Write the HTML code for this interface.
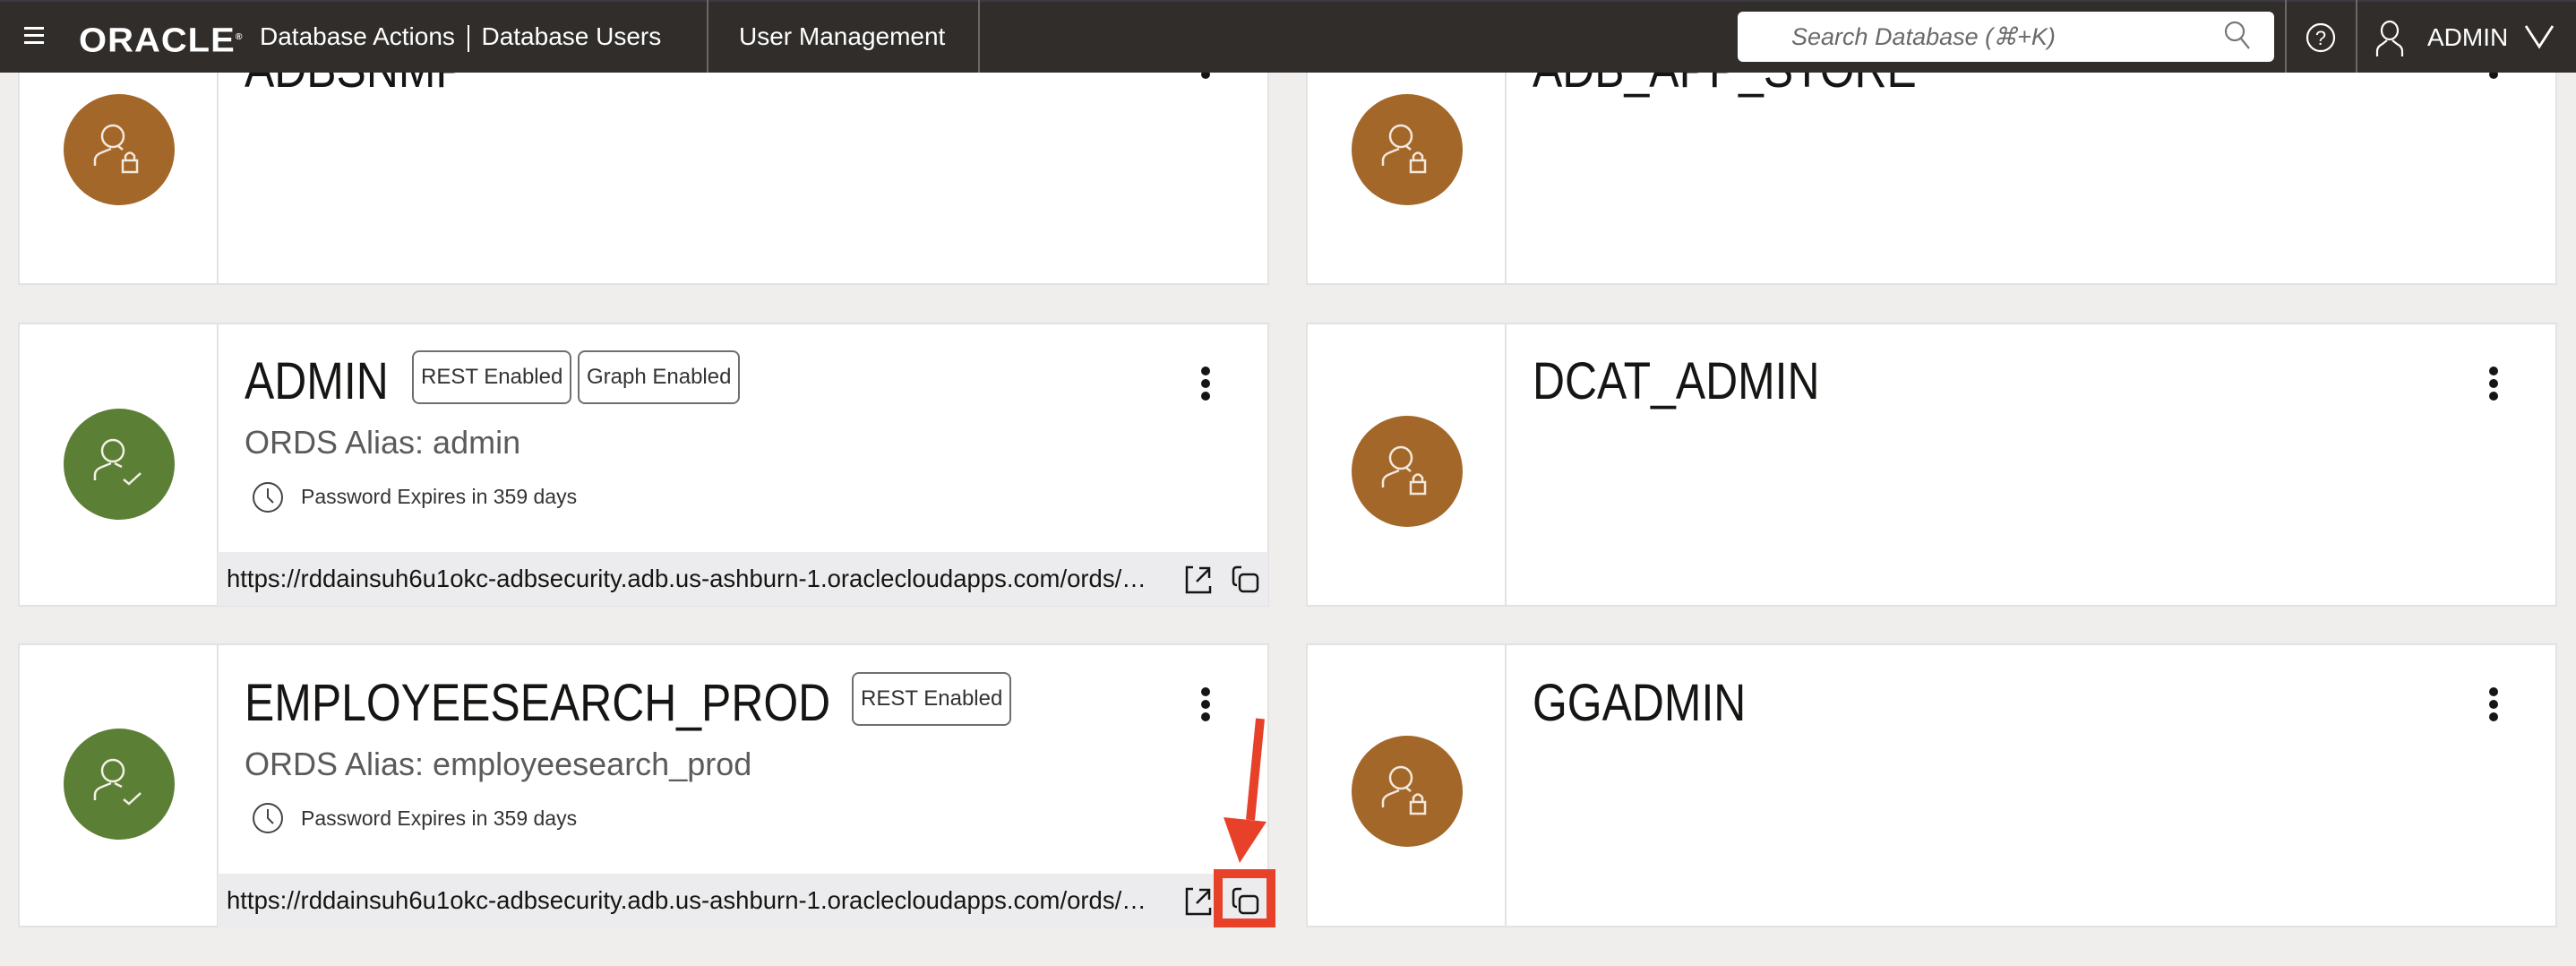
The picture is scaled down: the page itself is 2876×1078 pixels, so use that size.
<!DOCTYPE html>
<html><head><meta charset="utf-8">
<style>
*{margin:0;padding:0;box-sizing:border-box}
body{width:2876px;height:1078px;overflow:hidden;background:#efeeec;font-family:"Liberation Sans",sans-serif;position:relative}
.a{position:absolute}
.card{position:absolute;background:#fff;border:2px solid #e2e2e2}
.col{position:absolute;left:0;top:0;bottom:0;width:222px;border-right:2px solid #e2e2e2}
.av{position:absolute;width:124px;height:124px;border-radius:50%}
.name{position:absolute;font-size:58px;color:#161513;white-space:nowrap;transform:scaleX(.86);transform-origin:0 0;line-height:1}
.badge{position:absolute;border:2px solid #6f6f6f;border-radius:8px;font-size:24px;color:#333;height:60px;line-height:56px;padding:0 8px;white-space:nowrap}
.alias{position:absolute;font-size:36px;color:#5b5b5b;white-space:nowrap;line-height:1}
.pw{position:absolute;font-size:23px;color:#333;white-space:nowrap;line-height:1}
.url{position:absolute;background:#ececee;height:60px}
.url span{position:absolute;left:10px;top:14px;width:1042px;font-size:27.5px;color:#161513;white-space:nowrap;overflow:hidden;text-overflow:ellipsis;line-height:32px}
.keb{position:absolute;width:10px}
.keb i{display:block;width:10px;height:10px;border-radius:50%;background:#161513;margin-bottom:4px}
</style></head><body>

<!-- Row 1 -->
<div class="card" style="left:20px;top:2px;width:1397px;height:316px"><div class="col"></div></div>
<div class="card" style="left:1458px;top:2px;width:1397px;height:316px"><div class="col"></div></div>
<div class="name" style="left:273px;top:49px">ADBSNMP</div>
<div class="name" style="left:1711px;top:49px">ADB_APP_STORE</div>

<!-- Row 2 -->
<div class="card" style="left:20px;top:360px;width:1397px;height:317px"><div class="col"></div></div>
<div class="card" style="left:1458px;top:360px;width:1397px;height:317px"><div class="col"></div></div>
<div class="name" style="left:273px;top:397px">ADMIN</div>
<div class="badge" style="left:460px;top:391px">REST Enabled</div>
<div class="badge" style="left:645px;top:391px">Graph Enabled</div>
<div class="alias" style="left:273px;top:476px">ORDS Alias: admin</div>
<svg class="a" style="left:280px;top:536px" width="38" height="38" viewBox="0 0 38 38"><circle cx="19" cy="19" r="16" fill="none" stroke="#444" stroke-width="2"/><path d="M19 9v10l6 6" fill="none" stroke="#444" stroke-width="2"/></svg>
<div class="pw" style="left:336px;top:543px">Password Expires in 359 days</div>
<div class="url" style="left:243px;top:616px;width:1173px"><span>https://rddainsuh6u1okc-adbsecurity.adb.us-ashburn-1.oraclecloudapps.com/ords/admin/</span></div>
<div class="name" style="left:1711px;top:397px">DCAT_ADMIN</div>

<!-- Row 3 -->
<div class="card" style="left:20px;top:718px;width:1397px;height:317px"><div class="col"></div></div>
<div class="card" style="left:1458px;top:718px;width:1397px;height:317px"><div class="col"></div></div>
<div class="name" style="left:273px;top:756px">EMPLOYEESEARCH_PROD</div>
<div class="badge" style="left:951px;top:750px">REST Enabled</div>
<div class="alias" style="left:273px;top:835px">ORDS Alias: employeesearch_prod</div>
<svg class="a" style="left:280px;top:894px" width="38" height="38" viewBox="0 0 38 38"><circle cx="19" cy="19" r="16" fill="none" stroke="#444" stroke-width="2"/><path d="M19 9v10l6 6" fill="none" stroke="#444" stroke-width="2"/></svg>
<div class="pw" style="left:336px;top:902px">Password Expires in 359 days</div>
<div class="url" style="left:243px;top:975px;width:1173px"><span>https://rddainsuh6u1okc-adbsecurity.adb.us-ashburn-1.oraclecloudapps.com/ords/employeesearch_prod/</span></div>
<div class="name" style="left:1711px;top:756px">GGADMIN</div>

<!-- kebabs -->
<div class="keb" style="left:1341px;top:50px"><i></i><i></i><i></i></div>
<div class="keb" style="left:2779px;top:50px"><i></i><i></i><i></i></div>
<div class="keb" style="left:1341px;top:409px"><i></i><i></i><i></i></div>
<div class="keb" style="left:2779px;top:409px"><i></i><i></i><i></i></div>
<div class="keb" style="left:1341px;top:767px"><i></i><i></i><i></i></div>
<div class="keb" style="left:2779px;top:767px"><i></i><i></i><i></i></div>

<!-- avatars -->
<svg width="0" height="0" style="position:absolute"><defs>
<g id="lock"><circle cx="55" cy="47" r="12" fill="none" stroke="#f3e8dc" stroke-width="2.5"/><path d="M35 80v-6q0-6 8-9l10-4M61 58l5 4" fill="none" stroke="#f3e8dc" stroke-width="2.5"/><rect x="66" y="74" width="16" height="13" fill="none" stroke="#f3e8dc" stroke-width="2.5"/><path d="M69 74v-5q5-7 10 0v5" fill="none" stroke="#f3e8dc" stroke-width="2.5"/></g>
<g id="chk"><circle cx="55" cy="47" r="12" fill="none" stroke="#f3f0e6" stroke-width="2.5"/><path d="M35 80v-6q0-6 8-9l10-4M57 61l8 4M67 79l6 5l13-12" fill="none" stroke="#f3f0e6" stroke-width="2.5"/></g>
</defs></svg>
<svg class="av" style="left:71px;top:105px;background:#a4672a" viewBox="0 0 124 124"><use href="#lock"/></svg>
<svg class="av" style="left:1509px;top:105px;background:#a4672a" viewBox="0 0 124 124"><use href="#lock"/></svg>
<svg class="av" style="left:71px;top:456px;background:#5b7f35" viewBox="0 0 124 124"><use href="#chk"/></svg>
<svg class="av" style="left:1509px;top:464px;background:#a4672a" viewBox="0 0 124 124"><use href="#lock"/></svg>
<svg class="av" style="left:71px;top:813px;background:#5b7f35" viewBox="0 0 124 124"><use href="#chk"/></svg>
<svg class="av" style="left:1509px;top:821px;background:#a4672a" viewBox="0 0 124 124"><use href="#lock"/></svg>

<!-- url icons -->
<svg class="a" style="left:1322px;top:631px" width="32" height="32" viewBox="0 0 32 32"><path d="M10 2H3v28h26v-7M14 18L28 4M17 3h11v11" fill="none" stroke="#161513" stroke-width="2.5"/></svg>
<svg class="a" style="left:1375px;top:631px" width="32" height="32" viewBox="0 0 32 32"><path d="M11 2H6Q2 2 2 6v12q0 4 4 4" fill="none" stroke="#161513" stroke-width="2.5"/><rect x="9" y="10" width="20" height="19" rx="4" fill="none" stroke="#161513" stroke-width="2.5"/></svg>
<svg class="a" style="left:1322px;top:990px" width="32" height="32" viewBox="0 0 32 32"><path d="M10 2H3v28h26v-7M14 18L28 4M17 3h11v11" fill="none" stroke="#161513" stroke-width="2.5"/></svg>
<svg class="a" style="left:1375px;top:990px" width="32" height="32" viewBox="0 0 32 32"><path d="M11 2H6Q2 2 2 6v12q0 4 4 4" fill="none" stroke="#161513" stroke-width="2.5"/><rect x="9" y="10" width="20" height="19" rx="4" fill="none" stroke="#161513" stroke-width="2.5"/></svg>

<!-- red annotation -->
<div class="a" style="left:1355px;top:970px;width:69px;height:65px;border:10px solid #e8412a"></div>
<svg class="a" style="left:1360px;top:795px" width="60" height="175" viewBox="1360 795 60 175"><path d="M1407 802L1396 915" stroke="#e8412a" stroke-width="10"/><path d="M1366 912L1414 917L1384 963Z" fill="#e8412a"/></svg>

<!-- header -->
<div class="a" style="left:0;top:0;width:2876px;height:81px;background:#312d2a;border-top:2px solid #3c3a40"></div>
<div class="a" style="left:27px;top:30px;width:22px"><div style="height:3px;background:#fff;margin-bottom:5px"></div><div style="height:3px;background:#fff;margin-bottom:5px"></div><div style="height:3px;background:#fff"></div></div>
<div class="a" style="left:88px;top:22px;color:#fff;font-size:38px;font-weight:bold;letter-spacing:1px;transform:scaleX(1.05);transform-origin:0 0;line-height:40px">ORACLE<sup style="font-size:10px">®</sup></div>
<div class="a" style="left:290px;top:24px;color:#fff;font-size:28px;line-height:34px;white-space:nowrap">Database Actions <span style="display:inline-block;width:2px;height:30px;background:#fff;vertical-align:middle;margin:0 6px"></span> Database Users</div>
<div class="a" style="left:789px;top:0;width:2px;height:81px;background:#6b6764"></div>
<div class="a" style="left:825px;top:24px;color:#fff;font-size:28px;line-height:34px;white-space:nowrap">User Management</div>
<div class="a" style="left:1092px;top:0;width:2px;height:81px;background:#6b6764"></div>
<div class="a" style="left:1940px;top:13px;width:599px;height:56px;background:#fff;border-radius:6px"></div>
<div class="a" style="left:2000px;top:25px;color:#6a6a6a;font-size:27px;font-style:italic;line-height:32px;white-space:nowrap">Search Database (⌘+K)</div>
<svg class="a" style="left:2482px;top:22px" width="34" height="34" viewBox="0 0 34 34"><circle cx="13" cy="13" r="10" fill="none" stroke="#777" stroke-width="2.2"/><path d="M20 21l9 11" stroke="#777" stroke-width="2.2"/></svg>
<div class="a" style="left:2551px;top:0;width:2px;height:81px;background:#6b6764"></div>
<svg class="a" style="left:2572px;top:23px" width="38" height="38" viewBox="0 0 38 38"><circle cx="19" cy="19" r="15" fill="none" stroke="#fff" stroke-width="2.2"/><text x="19" y="27" text-anchor="middle" font-size="22" fill="#fff" font-family="Liberation Sans">?</text></svg>
<div class="a" style="left:2630px;top:0;width:2px;height:81px;background:#6b6764"></div>
<svg class="a" style="left:2652px;top:22px" width="32" height="42" viewBox="0 0 32 42"><ellipse cx="16" cy="12" rx="9" ry="10" fill="none" stroke="#fff" stroke-width="2.2"/><path d="M2 41v-6q0-5 6-8l5-4M19 23l5 4q6 3 6 8v6" fill="none" stroke="#fff" stroke-width="2.2"/></svg>
<div class="a" style="left:2710px;top:25px;color:#fff;font-size:28px;line-height:34px">ADMIN</div>
<svg class="a" style="left:2818px;top:27px" width="34" height="28" viewBox="0 0 34 28"><path d="M2 2l15 23L32 2" fill="none" stroke="#fff" stroke-width="2.8"/></svg>
</body></html>
